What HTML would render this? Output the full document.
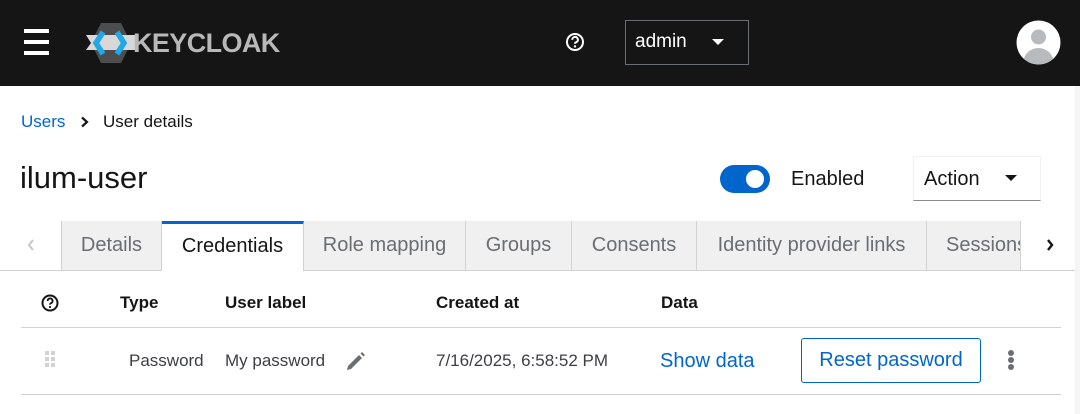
<!DOCTYPE html>
<html><head><meta charset="utf-8"><style>
*{box-sizing:border-box;margin:0;padding:0}
body{width:1080px;height:414px;overflow:hidden;background:#fff;font-family:"Liberation Sans",sans-serif;color:#151515;position:relative}
.a{position:absolute}
.hdr{left:0;top:0;width:1080px;height:86px;background:#151515}
.tab{position:absolute;top:221px;height:49px;background:#f0f0f0;border-right:1px solid #d2d2d2;color:#6a6e73;font-size:20px;line-height:49px;text-align:center;white-space:nowrap;overflow:hidden}
.th{position:absolute;top:293px;font-size:17px;font-weight:bold;line-height:20px}
.td{position:absolute;top:351px;font-size:17px;line-height:20px}
</style></head><body>
<div class="a hdr"></div>
<div class="a" style="left:24px;top:29px;width:25px;height:4px;background:#fff"></div>
<div class="a" style="left:24px;top:40px;width:25px;height:4px;background:#fff"></div>
<div class="a" style="left:24px;top:51px;width:25px;height:4px;background:#fff"></div>
<svg class="a" style="left:84px;top:22px" width="56" height="42" viewBox="0 0 56 42">
<polygon points="17,1 37,1 47,21 37,41 17,41 7,21" fill="#4d4d4d"/>
<polygon points="2,13 52,13 52,28 2,28 7,21" fill="#d8d8d8"/>
<polyline points="19,10 12,21 19,32" fill="none" stroke="#20a8e8" stroke-width="5.5"/>
<polyline points="33,10 40,21 33,32" fill="none" stroke="#20a8e8" stroke-width="5.5"/>
</svg>
<div class="a" style="left:133px;top:28px;font-size:27px;font-weight:bold;color:#b8b8b8;letter-spacing:-0.6px;line-height:30px">KEYCLOAK</div>
<svg class="a" style="left:565px;top:32px" width="20" height="20" viewBox="0 0 20 20"><circle cx="10" cy="10" r="8" fill="none" stroke="#fff" stroke-width="2"/><path d="M7.3 7.8a2.8 2.8 0 1 1 3.6 2.6c-.7.3-.9.7-.9 1.4" fill="none" stroke="#fff" stroke-width="2"/><circle cx="10" cy="14.4" r="1.2" fill="#fff"/></svg>
<div class="a" style="left:625px;top:20px;width:124px;height:45px;border:1px solid #6a6e73"></div>
<div class="a" style="left:635px;top:31px;color:#fff;font-size:19px;line-height:22px">admin</div>
<div class="a" style="left:712px;top:39px;width:0;height:0;border-left:6px solid transparent;border-right:6px solid transparent;border-top:6px solid #fff"></div>
<svg class="a" style="left:1016px;top:20px" width="45" height="45" viewBox="0 0 45 45"><defs><clipPath id="c"><circle cx="22.5" cy="22.5" r="22"/></clipPath></defs><circle cx="22.5" cy="22.5" r="22" fill="#fff"/><g clip-path="url(#c)" fill="#b8bbbe"><circle cx="22.5" cy="17" r="7.5"/><ellipse cx="22.5" cy="42" rx="15" ry="14"/></g></svg>
<div class="a" style="left:21px;top:112px;font-size:17px;color:#0066cc;line-height:20px">Users</div>
<svg class="a" style="left:80px;top:116px" width="10" height="12" viewBox="0 0 10 12"><polyline points="2,1.5 7,6 2,10.5" fill="none" stroke="#151515" stroke-width="2.2"/></svg>
<div class="a" style="left:103px;top:112px;font-size:17px;line-height:20px">User details</div>
<div class="a" style="left:20px;top:160px;font-size:31px;line-height:36px">ilum-user</div>
<div class="a" style="left:720px;top:165px;width:50px;height:28px;border-radius:14px;background:#0066cc"></div>
<div class="a" style="left:746px;top:170px;width:18px;height:18px;border-radius:50%;background:#fff"></div>
<div class="a" style="left:791px;top:168px;font-size:20px;line-height:22px">Enabled</div>
<div class="a" style="left:913px;top:156px;width:128px;height:45px;border:1px solid #f0f0f0;border-bottom:1px solid #8a8d90"></div>
<div class="a" style="left:924px;top:168px;font-size:20px;line-height:22px">Action</div>
<div class="a" style="left:1005px;top:175px;width:0;height:0;border-left:6px solid transparent;border-right:6px solid transparent;border-top:6px solid #151515"></div>
<div class="a" style="left:0;top:270px;width:1080px;height:1px;background:#d2d2d2"></div>
<svg class="a" style="left:26px;top:238px" width="10" height="14" viewBox="0 0 10 14"><polyline points="7,2 3,7 7,12" fill="none" stroke="#c7c7c7" stroke-width="2"/></svg>
<div class="tab" style="left:61px;width:101px;border-left:1px solid #d2d2d2">Details</div>
<div class="tab" style="left:162px;width:142px;background:#fff;color:#151515;border-top:3px solid #0066cc;line-height:45px;height:50px">Credentials</div>
<div class="tab" style="left:304px;width:162px">Role mapping</div>
<div class="tab" style="left:466px;width:106px">Groups</div>
<div class="tab" style="left:572px;width:125px">Consents</div>
<div class="tab" style="left:697px;width:230px">Identity provider links</div>
<div class="tab" style="left:927px;width:94px;text-align:left;padding-left:19px">Sessions</div>
<div class="a" style="left:1021px;top:221px;width:59px;height:49px;background:#fff"></div>
<svg class="a" style="left:1045px;top:238px" width="10" height="14" viewBox="0 0 10 14"><polyline points="3,2 7,7 3,12" fill="none" stroke="#151515" stroke-width="2.4"/></svg>
<svg class="a" style="left:40px;top:293px" width="20" height="20" viewBox="0 0 20 20"><circle cx="10" cy="10" r="7.5" fill="none" stroke="#151515" stroke-width="2"/><path d="M7.6 8a2.5 2.5 0 1 1 3.2 2.3c-.6.3-.8.6-.8 1.3" fill="none" stroke="#151515" stroke-width="1.9"/><circle cx="10" cy="14" r="1.1" fill="#151515"/></svg>
<div class="th" style="left:120px">Type</div>
<div class="th" style="left:225px">User label</div>
<div class="th" style="left:436px">Created at</div>
<div class="th" style="left:661px">Data</div>
<div class="a" style="left:21px;top:327px;width:1040px;height:1px;background:#d2d2d2"></div>
<svg class="a" style="left:44px;top:350px" width="14" height="19" viewBox="0 0 14 19" fill="#d2d2d2"><rect x="1" y="1" width="4" height="4"/><rect x="7" y="1" width="4" height="4"/><rect x="1" y="7" width="4" height="4"/><rect x="7" y="7" width="4" height="4"/><rect x="1" y="13" width="4" height="4"/><rect x="7" y="13" width="4" height="4"/></svg>
<div class="td" style="left:129px;color:#3c3f42">Password</div>
<div class="td" style="left:225px;color:#3c3f42">My password</div>
<svg class="a" style="left:345px;top:350px" width="22" height="22" viewBox="0 0 22 22"><path d="M3 16 L14 5 L17 8 L6 19 L2 20 Z" fill="#6a6e73"/><path d="M15.5 3.5 L17 2 L20 5 L18.5 6.5 Z" fill="#6a6e73"/></svg>
<div class="td" style="left:436px;color:#3c3f42">7/16/2025, 6:58:52 PM</div>
<div class="a" style="left:660px;top:350px;font-size:20px;color:#0066cc;line-height:22px">Show data</div>
<div class="a" style="left:801px;top:338px;width:180px;height:45px;border:1px solid #0066cc;border-radius:3px;color:#0066cc;font-size:20px;line-height:43px;text-align:center">Reset password</div>
<div class="a" style="left:1008px;top:350px;width:6px;height:6px;border-radius:50%;background:#6a6e73"></div>
<div class="a" style="left:1008px;top:357px;width:6px;height:6px;border-radius:50%;background:#6a6e73"></div>
<div class="a" style="left:1008px;top:364px;width:6px;height:6px;border-radius:50%;background:#6a6e73"></div>
<div class="a" style="left:21px;top:394px;width:1040px;height:1px;background:#d2d2d2"></div>
<div class="a" style="left:1075px;top:86px;width:5px;height:328px;background:#f5f5f5"></div>
</body></html>
